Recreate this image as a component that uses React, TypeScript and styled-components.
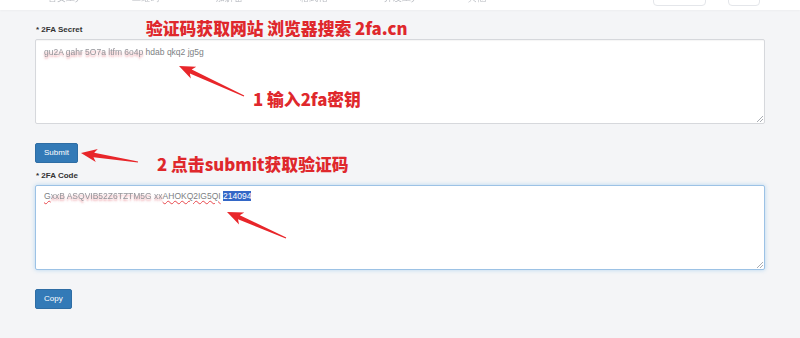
import React from "react";
import styled, { createGlobalStyle } from "styled-components";

const GlobalStyle = createGlobalStyle`
  html, body {
    margin: 0;
    padding: 0;
    background: #f4f5f7;
    font-family: "Liberation Sans", Arial, sans-serif;
  }
`;

const navItems = ["首页工具", "二维码", "加解密", "格式化", "开发工具", "其他"];

type Arrow = { x1: number; y1: number; x2: number; y2: number };

const arrows: Arrow[] = [
  { x1: 244, y1: 96, x2: 179, y2: 66 },
  { x1: 138, y1: 162, x2: 81, y2: 153 },
  { x1: 286, y1: 238, x2: 227, y2: 212 },
];

function ArrowShape({ x1, y1, x2, y2 }: Arrow) {
  const L = Math.hypot(x2 - x1, y2 - y1);
  const angle = (Math.atan2(y2 - y1, x2 - x1) * 180) / Math.PI;
  const points = [
    [0, -0.6],
    [L - 13, -2.2],
    [L - 16, -6.5],
    [L, 0],
    [L - 16, 6.5],
    [L - 13, 2.2],
    [0, 0.6],
  ]
    .map((p) => p.join(","))
    .join(" ");
  return (
    <polygon
      points={points}
      fill="#e8262a"
      transform={`translate(${x1} ${y1}) rotate(${angle})`}
    />
  );
}

export default function App() {
  return (
    <>
      <GlobalStyle />
      <Page>
        <Header>
          <Nav>
            {navItems.map((n) => (
              <NavItem key={n}>{n}</NavItem>
            ))}
          </Nav>
          <HeaderActions>
            <GhostButton $width={51} />
            <GhostButton $width={30} />
          </HeaderActions>
        </Header>

        <Form>
          <Label>* 2FA Secret</Label>
          <TextBox>
            <Blurred>gu2A gahr 5O7a ltfm 6o4p</Blurred> hdab qkq2 jg5g
          </TextBox>
          <ButtonRow>
            <Button>Submit</Button>
          </ButtonRow>

          <Label>* 2FA Code</Label>
          <TextBox $focused>
            <Misspelled>
              G<Blurred>xxB ASQVIB52Z6TZTM5G xx</Blurred>AHOKQ2IG5QI
            </Misspelled>{" "}
            <Selected>214094</Selected>
          </TextBox>
          <ButtonRow>
            <Button>Copy</Button>
          </ButtonRow>
        </Form>

        <Note $x={146} $y={17}>验证码获取网站 浏览器搜索 2fa.cn</Note>
        <Note $x={253} $y={88}>1 输入2fa密钥</Note>
        <Note $x={157} $y={153}>2 点击submit获取验证码</Note>

        <ArrowLayer viewBox="0 0 800 338" width={800} height={338}>
          {arrows.map((a, i) => (
            <ArrowShape key={i} {...a} />
          ))}
        </ArrowLayer>
      </Page>
    </>
  );
}

const Page = styled.div`
  position: relative;
  width: 800px;
  height: 338px;
  overflow: hidden;
  background: #f4f5f7;
`;

const Header = styled.div`
  height: 10px;
  background: #ffffff;
  display: flex;
  justify-content: space-between;
  overflow: hidden;
  box-shadow: 0 1px 2px rgba(0, 0, 0, 0.03);
`;

const Nav = styled.div`
  display: flex;
  gap: 52px;
  padding-left: 48px;
`;

const NavItem = styled.span`
  width: 32px;
  font-size: 9px;
  line-height: 9px;
  margin-top: -6px;
  color: #b9bcc2;
  white-space: nowrap;
  overflow: hidden;
  filter: blur(0.4px);
`;

const HeaderActions = styled.div`
  display: flex;
  gap: 22px;
  padding-right: 40px;
`;

const GhostButton = styled.div<{ $width: number }>`
  width: ${(p) => p.$width}px;
  height: 12px;
  margin-top: -8px;
  border: 1px solid #e4e6ea;
  border-radius: 4px;
`;

const Form = styled.div`
  display: flex;
  flex-direction: column;
  padding: 16px 35px 0 35px;
`;

const Label = styled.div`
  font-size: 8px;
  font-weight: 700;
  line-height: 8px;
  color: #333333;
  margin: 0 0 5px 1px;
`;

const TextBox = styled.div<{ $focused?: boolean }>`
  position: relative;
  box-sizing: border-box;
  width: 730px;
  height: 85px;
  padding: ${(p) => (p.$focused ? "5px 8px" : "7px 8px")};
  background: #ffffff;
  border: 1px solid ${(p) => (p.$focused ? "#9cc2e5" : "#d6d8dc")};
  border-radius: 2px;
  box-shadow: ${(p) =>
    p.$focused
      ? "0 0 4px rgba(102, 175, 233, 0.45)"
      : "inset 0 1px 1px rgba(0,0,0,0.04)"};
  font-size: 8.5px;
  line-height: 10px;
  color: #7d7f84;
  white-space: nowrap;

  &::after {
    content: "";
    position: absolute;
    right: 1px;
    bottom: 1px;
    width: 6px;
    height: 6px;
    background: linear-gradient(
      135deg,
      transparent 45%,
      #a9adb3 45%,
      #a9adb3 52%,
      transparent 52%,
      transparent 70%,
      #a9adb3 70%,
      #a9adb3 77%,
      transparent 77%
    );
  }
`;

const Blurred = styled.span`
  color: #94969b;
  filter: blur(0.6px);
  text-shadow: 0 2px 2px rgba(230, 120, 130, 0.7);
  display: inline-block;
`;

const Misspelled = styled.span`
  text-decoration: underline wavy #e8474c;
  text-decoration-thickness: 0.6px;
  text-underline-offset: 1px;
`;

const Selected = styled.span`
  background: #3367c7;
  color: #ffffff;
`;

const ButtonRow = styled.div`
  display: flex;
  padding: 19px 0 9px 0;
`;

const Button = styled.button`
  height: 20px;
  padding: 0 8px;
  border: 1px solid #2e6da4;
  border-radius: 2px;
  background: #337ab7;
  color: #ffffff;
  font-family: "Liberation Sans", Arial, sans-serif;
  font-size: 8px;
  line-height: 18px;
  cursor: pointer;
`;

const Note = styled.div<{ $x: number; $y: number }>`
  position: absolute;
  left: ${(p) => p.$x}px;
  top: ${(p) => p.$y}px;
  font-family: "Noto Sans CJK SC", "Noto Sans", sans-serif;
  font-weight: 900;
  font-size: 16.8px;
  line-height: 22px;
  color: #df282c;
  white-space: nowrap;
`;

const ArrowLayer = styled.svg`
  position: absolute;
  left: 0;
  top: 0;
  pointer-events: none;
`;
